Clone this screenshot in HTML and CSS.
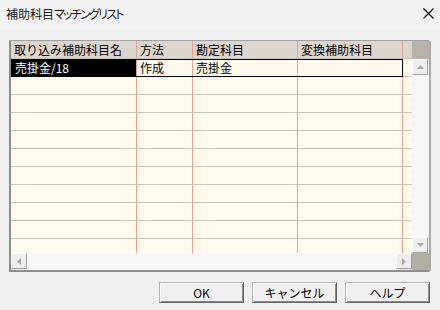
FILE: index.html
```html
<!DOCTYPE html>
<html lang="ja">
<head>
    <meta charset="UTF-8">
    <title>補助科目マッチングリスト</title>
    <link rel="stylesheet" href="styles.css">
</head>
<body>
    <div class="titlebar">
        <span class="title">補助科目<span class="kana">マッチングリスト</span></span>
        <span class="close">
            <svg width="11" height="11" viewBox="0 0 11 11"><path d="M0.5 0.5 L10.5 10.5 M10.5 0.5 L0.5 10.5" stroke="#000" stroke-width="1.1" fill="none"/></svg>
        </span>
    </div>

    <div class="client">
        <div class="grid-frame">
            <div class="grid-area">
                <div class="row head">
                    <div class="cell c1">取り込み補助科目名</div>
                    <div class="cell c2">方法</div>
                    <div class="cell c3">勘定科目</div>
                    <div class="cell c4">変換補助科目</div>
                </div>
                <div class="row">
                    <div class="sel">
                        <div class="cell c1">売掛金/18</div>
                        <div class="cell c2">作成</div>
                        <div class="cell c3">売掛金</div>
                        <div class="cell c4"></div>
                    </div>
                </div>
                <!-- empty rows -->
                <div class="row"><div class="cell c1"></div><div class="cell c2"></div><div class="cell c3"></div><div class="cell c4"></div></div>
                <div class="row"><div class="cell c1"></div><div class="cell c2"></div><div class="cell c3"></div><div class="cell c4"></div></div>
                <div class="row"><div class="cell c1"></div><div class="cell c2"></div><div class="cell c3"></div><div class="cell c4"></div></div>
                <div class="row"><div class="cell c1"></div><div class="cell c2"></div><div class="cell c3"></div><div class="cell c4"></div></div>
                <div class="row"><div class="cell c1"></div><div class="cell c2"></div><div class="cell c3"></div><div class="cell c4"></div></div>
                <div class="row"><div class="cell c1"></div><div class="cell c2"></div><div class="cell c3"></div><div class="cell c4"></div></div>
                <div class="row"><div class="cell c1"></div><div class="cell c2"></div><div class="cell c3"></div><div class="cell c4"></div></div>
                <div class="row"><div class="cell c1"></div><div class="cell c2"></div><div class="cell c3"></div><div class="cell c4"></div></div>
                <div class="row"><div class="cell c1"></div><div class="cell c2"></div><div class="cell c3"></div><div class="cell c4"></div></div>
                <div class="row"><div class="cell c1"></div><div class="cell c2"></div><div class="cell c3"></div><div class="cell c4"></div></div>
            </div>

            <div class="vscroll">
                <div class="vs-head"></div>
                <div class="sb-btn">
                    <svg width="7" height="4" viewBox="0 0 7 4"><polygon points="3.5,0 7,4 0,4" fill="#a6a6a6"/></svg>
                </div>
                <div class="track"></div>
                <div class="sb-btn">
                    <svg width="7" height="4" viewBox="0 0 7 4"><polygon points="0,0 7,0 3.5,4" fill="#a6a6a6"/></svg>
                </div>
            </div>

            <div class="hscroll">
                <div class="sb-btn">
                    <svg width="4" height="7" viewBox="0 0 4 7"><polygon points="0,3.5 4,0 4,7" fill="#a6a6a6"/></svg>
                </div>
                <div class="track"></div>
                <div class="sb-btn">
                    <svg width="4" height="7" viewBox="0 0 4 7"><polygon points="0,0 4,3.5 0,7" fill="#a6a6a6"/></svg>
                </div>
            </div>

            <div class="corner"></div>
        </div>

        <div class="buttons">
            <button class="btn">OK</button>
            <button class="btn">キャンセル</button>
            <button class="btn">ヘルプ</button>
        </div>
    </div>
</body>
</html>
```

FILE: styles.css
```css
body {
    margin: 0;
    width: 440px;
    height: 310px;
    overflow: hidden;
    background-color: #f0f0f0;
    font-family: "Noto Sans CJK JP", "Noto Sans", sans-serif;
    font-size: 12px;
    color: #000;
}
.titlebar {
    height: 30px;
    display: flex;
    align-items: center;
    justify-content: space-between;
    padding: 0 6px 0 6px;
    background-color: #f2f2f2;
}
.title {
    font-size: 12px;
    line-height: 28px;
    margin-top: -2px;
    color: #1a1a1a;
}
.title .kana {
    font-feature-settings: "palt";
    letter-spacing: -1.7px;
}
.close {
    display: flex;
    margin-top: -4px;
}
.client {
    padding: 10px 0 0 9px;
}
.grid-frame {
    width: 418px;
    display: grid;
    grid-template-columns: 401px 17px;
    grid-template-rows: 212px 17px;
    border-left: 2px solid #8c8c8c;
    border-top: 1px solid #a0a0a0;
    border-bottom: 2px solid #8c8c8c;
    border-right: 2px solid #a8a8a8;
    border-top-right-radius: 3px;
    border-bottom-right-radius: 3px;
}
.grid-area {
    background-color: #fffaeb;
    overflow: hidden;
}
.row {
    display: flex;
    height: 18px;
    box-sizing: border-box;
    border-bottom: 1px solid #cac2b6;
}
.cell {
    box-sizing: border-box;
    height: 17px;
    line-height: 17px;
    padding-left: 3px;
    border-right: 1px solid #e2a294;
    white-space: nowrap;
    overflow: hidden;
}
.c1 { width: 126px; }
.c2 { width: 56px; }
.c3 { width: 105px; }
.c4 { width: 105px; }
.head {
    background-color: #dcd5cd;
}
.sel {
    display: flex;
    width: 392px;
    height: 18px;
    box-sizing: border-box;
    border: 1px solid #000;
}
.sel .cell {
    height: 16px;
    line-height: 16px;
}
.sel .c1 {
    width: 125px;
    background-color: #000;
    color: #fff;
}
.sel .c4 {
    width: 104px;
    border-right: none;
}
.vscroll {
    display: flex;
    flex-direction: column;
}
.vs-head {
    height: 18px;
    background-color: #b7b3ab;
}
.hscroll {
    display: flex;
}
.sb-btn {
    width: 16px;
    height: 16px;
    flex: none;
    box-sizing: border-box;
    display: flex;
    align-items: center;
    justify-content: center;
    background-color: #ededed;
    border-top: 1px solid #fff;
    border-left: 1px solid #fff;
    border-right: 1px solid #a0a0a0;
    border-bottom: 1px solid #a0a0a0;
}
.track {
    flex: 1;
    background: repeating-conic-gradient(#f0f0f0 0 25%, #ffffff 0 50%) 0 0 / 2px 2px;
}
.corner {
    background-color: #b2aea6;
}
.buttons {
    display: flex;
    justify-content: flex-end;
    gap: 8px;
    padding-right: 10px;
    margin-top: 10px;
}
.btn {
    width: 85px;
    height: 21px;
    padding: 0;
    font-family: "Noto Sans CJK JP", "Noto Sans", sans-serif;
    font-size: 12px;
    color: #000;
    background-color: #f0f0f0;
    border-top: 1px solid #b0b0b0;
    border-left: 1px solid #b0b0b0;
    border-right: 1px solid #646464;
    border-bottom: 1px solid #646464;
    box-shadow: inset 1px 1px #fff, inset -1px -1px #8c8c8c;
}
```
